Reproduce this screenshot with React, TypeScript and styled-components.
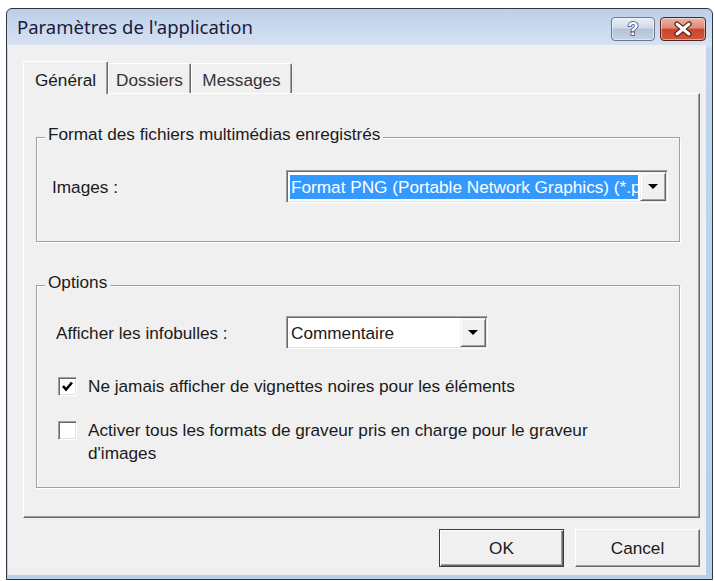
import styled, { createGlobalStyle } from "styled-components";

const GlobalStyle = createGlobalStyle`
    html,
    body {
        margin: 0;
        padding: 0;
        background: #ffffff;
    }

    body {
        font-family: "Liberation Sans", Arial, sans-serif;
        font-size: 17.2px;
        line-height: 20px;
        color: #1a1a1a;
    }
`;

const Window = styled.div`
    width: 707px;
    height: 572px;
    margin: 8px 0 0 6px;
    box-sizing: border-box;

    display: flex;
    flex-direction: column;

    border: 1px solid #2f3744;
    border-radius: 6px 6px 0 0;
    background: linear-gradient(to bottom, #bccfe9 0, #d6e2f2 36px, #c2d5ed 40px, #b9cee9 100%);
`;

const TitleBar = styled.div`
    height: 36px;
    flex: none;
    display: flex;
    align-items: flex-start;
    padding: 0 6px 0 10px;
`;

const Title = styled.h1`
    margin: 6px 0 0;
    font-family: "Noto Sans", "Open Sans", sans-serif;
    font-size: 18.5px;
    font-weight: normal;
    line-height: 24px;
    color: #1b1b3c;
`;

const Caption = styled.div`
    margin: 8px 0 0 auto;
    display: flex;
    gap: 5px;
`;

const CaptionButton = styled.button<{ $close?: boolean }>`
    width: ${p => (p.$close ? 46 : 44)}px;
    height: 24px;
    padding: 0;
    box-sizing: border-box;

    display: flex;
    align-items: center;
    justify-content: center;

    border: 1px solid ${p => (p.$close ? "#5a2017" : "#6b7a91")};
    border-radius: 4px;
    background: ${p =>
        p.$close
            ? "linear-gradient(to bottom, #ebb3a6 0%, #dd8b78 45%, #c9472e 52%, #d0583c 100%)"
            : "linear-gradient(to bottom, #e8eef6 0%, #d0dae8 45%, #b3c3d9 52%, #c4d2e4 100%)"};
    box-shadow: inset 0 0 0 1px rgba(255, 255, 255, 0.45);
`;

const Client = styled.div`
    flex: 1;
    margin: 0 6px 4px 1px;
    padding: 16px 6px 0 15px;

    display: flex;
    flex-direction: column;

    background: #f0f0f0;
`;

const TabStrip = styled.div`
    height: 32px;
    flex: none;
    display: flex;
    align-items: flex-end;
`;

const Tab = styled.div<{ $active?: boolean; $width: number }>`
    width: ${p => p.$width}px;
    height: ${p => (p.$active ? 33 : 30)}px;
    box-sizing: border-box;
    padding-top: 3px;
    margin-bottom: ${p => (p.$active ? -1 : 0)}px;

    display: flex;
    align-items: center;
    justify-content: center;

    position: relative;
    z-index: ${p => (p.$active ? 1 : 0)};

    border-style: solid;
    border-width: 1px 1px 0 1px;
    border-color: #ffffff #696969 transparent #ffffff;
    border-radius: 2px 2px 0 0;
    box-shadow: inset -1px 0 0 #a0a0a0;
    background: #f0f0f0;

    color: ${p => (p.$active ? "#1a1a1a" : "#333333")};
    white-space: nowrap;
`;

const Panel = styled.div`
    height: 425px;
    box-sizing: border-box;
    padding: 43px 19px 0 12px;

    display: flex;
    flex-direction: column;
    gap: 43px;

    border-style: solid;
    border-width: 1px;
    border-color: #ffffff #696969 #696969 #ffffff;
    box-shadow: inset -1px -1px 0 #a0a0a0;
`;

const GroupBox = styled.section<{ $bottom: number }>`
    padding: 0 12px ${p => p.$bottom}px 15px;

    display: flex;
    flex-direction: column;

    border: 1px solid #a0a0a0;
    box-shadow: 1px 1px 0 #ffffff, inset 1px 1px 0 #ffffff;
`;

const Legend = styled.h2`
    margin: -14px 0 0 -7px;
    padding: 0 3px;
    align-self: flex-start;

    font-size: inherit;
    font-weight: normal;
    line-height: 20px;

    background: #f0f0f0;
`;

const FieldRow = styled.div<{ $top: number }>`
    margin-top: ${p => p.$top}px;
    display: flex;
    align-items: center;
`;

const FieldLabel = styled.span<{ $indent?: number }>`
    width: 234px;
    flex: none;
    box-sizing: border-box;
    padding-left: ${p => p.$indent ?? 0}px;
`;

const Combo = styled.div<{ $width: number }>`
    width: ${p => p.$width}px;
    height: 33px;
    box-sizing: border-box;
    padding: 1px;

    display: flex;

    border: 1px solid;
    border-color: #a0a0a0 #ffffff #ffffff #a0a0a0;
    box-shadow: inset 1px 1px 0 #696969, inset -1px -1px 0 #e3e3e3;
    background: #ffffff;
`;

const ComboValue = styled.span<{ $selected?: boolean }>`
    flex: 1;
    min-width: 0;
    margin: 3px 2px 2px 2px;
    padding-left: 1px;

    display: flex;
    align-items: center;

    overflow: hidden;
    white-space: nowrap;

    background: ${p => (p.$selected ? "#3399ff" : "transparent")};
    color: ${p => (p.$selected ? "#ffffff" : "#1a1a1a")};
`;

const DropButton = styled.span`
    width: 26px;
    flex: none;
    box-sizing: border-box;

    display: flex;
    align-items: center;
    justify-content: center;

    border: 1px solid;
    border-color: #f0f0f0 #696969 #696969 #f0f0f0;
    box-shadow: inset 1px 1px 0 #ffffff, inset -1px -1px 0 #a0a0a0;
    background: #f0f0f0;

    &::after {
        content: "";
        display: block;
        border-left: 5px solid transparent;
        border-right: 5px solid transparent;
        border-top: 5px solid #000000;
    }
`;

const CheckRow = styled.label<{ $top: number }>`
    margin-top: ${p => p.$top}px;
    padding-left: 6px;

    display: flex;
    align-items: flex-start;
    gap: 11px;

    line-height: 23px;
`;

const CheckBox = styled.span`
    width: 19px;
    height: 19px;
    margin-top: 2px;
    flex: none;
    box-sizing: border-box;

    display: flex;
    align-items: center;
    justify-content: center;

    border: 1px solid;
    border-color: #a0a0a0 #ffffff #ffffff #a0a0a0;
    box-shadow: inset 1px 1px 0 #696969, inset -1px -1px 0 #e3e3e3;
    background: #ffffff;
`;

const CheckText = styled.span`
    max-width: 530px;
`;

const ButtonRow = styled.div`
    margin-top: 11px;
    display: flex;
    justify-content: flex-end;
    gap: 11px;
`;

const DialogButton = styled.button<{ $default?: boolean }>`
    width: 125px;
    height: 38px;
    padding: 0;
    box-sizing: border-box;

    font: inherit;
    color: #1a1a1a;

    border: 1px solid;
    border-color: ${p => (p.$default ? "#3c3c3c" : "#ffffff #696969 #696969 #ffffff")};
    box-shadow: ${p =>
        p.$default
            ? "inset 1px 1px 0 #ffffff, inset -1px -1px 0 #696969, inset -2px -2px 0 #a0a0a0"
            : "inset -1px -1px 0 #a0a0a0"};
    background: #f0f0f0;
`;

const HelpGlyph = () => (
    <svg width="20" height="20" viewBox="0 0 20 20">
        <text
            x="10"
            y="16"
            textAnchor="middle"
            fontFamily="Liberation Sans, Arial, sans-serif"
            fontWeight="bold"
            fontSize="18"
            fill="#ffffff"
            stroke="#3d4d68"
            strokeWidth="1.6"
            paintOrder="stroke"
        >
            ?
        </text>
    </svg>
);

const CloseGlyph = () => (
    <svg width="20" height="16" viewBox="0 0 20 16">
        <path d="M4 3 L16 13 M16 3 L4 13" stroke="#4a1810" strokeWidth="5.2" strokeLinecap="round" fill="none" />
        <path d="M4 3 L16 13 M16 3 L4 13" stroke="#ffffff" strokeWidth="3" strokeLinecap="round" fill="none" />
    </svg>
);

const CheckMark = () => (
    <svg width="13" height="13" viewBox="0 0 13 13">
        <path d="M2 6 L5 9.5 L11 2.5" stroke="#000000" strokeWidth="2.6" fill="none" strokeLinejoin="miter" />
    </svg>
);

const App = () => {
    return (
        <>
            <GlobalStyle />
            <Window>
                <TitleBar>
                    <Title>Paramètres de l'application</Title>
                    <Caption>
                        <CaptionButton>
                            <HelpGlyph />
                        </CaptionButton>
                        <CaptionButton $close>
                            <CloseGlyph />
                        </CaptionButton>
                    </Caption>
                </TitleBar>
                <Client>
                    <TabStrip>
                        <Tab $active $width={85}>Général</Tab>
                        <Tab $width={83}>Dossiers</Tab>
                        <Tab $width={101}>Messages</Tab>
                    </TabStrip>
                    <Panel>
                        <GroupBox $bottom={38}>
                            <Legend>Format des fichiers multimédias enregistrés</Legend>
                            <FieldRow $top={26}>
                                <FieldLabel>Images :</FieldLabel>
                                <Combo $width={382}>
                                    <ComboValue $selected>
                                        Format PNG (Portable Network Graphics) (*.png)
                                    </ComboValue>
                                    <DropButton />
                                </Combo>
                            </FieldRow>
                        </GroupBox>
                        <GroupBox $bottom={22}>
                            <Legend>Options</Legend>
                            <FieldRow $top={24}>
                                <FieldLabel $indent={4}>Afficher les infobulles :</FieldLabel>
                                <Combo $width={202}>
                                    <ComboValue>Commentaire</ComboValue>
                                    <DropButton />
                                </Combo>
                            </FieldRow>
                            <CheckRow $top={26}>
                                <CheckBox>
                                    <CheckMark />
                                </CheckBox>
                                <CheckText>Ne jamais afficher de vignettes noires pour les éléments</CheckText>
                            </CheckRow>
                            <CheckRow $top={21}>
                                <CheckBox />
                                <CheckText>
                                    Activer tous les formats de graveur pris en charge pour le graveur d'images
                                </CheckText>
                            </CheckRow>
                        </GroupBox>
                    </Panel>
                    <ButtonRow>
                        <DialogButton $default>OK</DialogButton>
                        <DialogButton>Cancel</DialogButton>
                    </ButtonRow>
                </Client>
            </Window>
        </>
    );
};

export default App;
